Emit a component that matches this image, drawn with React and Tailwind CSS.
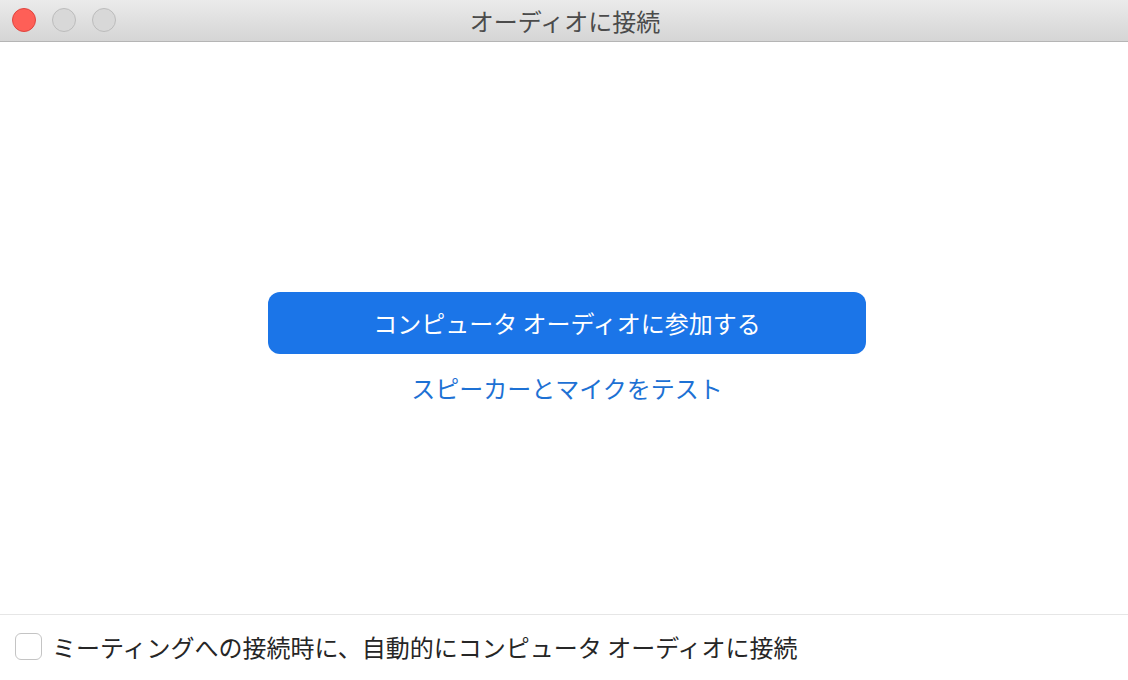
export default function App() {
  const font = { fontFamily: '"Noto Sans CJK JP", "Noto Sans", sans-serif' }
  return (
    <div className="w-[1128px] h-[680px] flex flex-col bg-white overflow-hidden" style={font}>
      <div className="h-[42px] shrink-0 relative flex items-center justify-center bg-gradient-to-b from-[#ebebeb] to-[#d5d5d5] border-b border-[#b5b5b5]">
        <div className="absolute left-[12px] top-[8px] flex gap-[16px]">
          <span className="w-[24px] h-[24px] rounded-full bg-[#fe5f57] border border-[#e0443e]" />
          <span className="w-[24px] h-[24px] rounded-full bg-[#d8d8d8] border border-[#bcbcbc]" />
          <span className="w-[24px] h-[24px] rounded-full bg-[#d8d8d8] border border-[#bcbcbc]" />
        </div>
        <span className="text-[24px] leading-none text-[#4b4b4b] pl-[2px]">オーディオに接続</span>
      </div>

      <div className="flex-1 flex flex-col items-center justify-center pt-[36px] pl-[6px]">
        <button className="w-[598px] h-[62px] rounded-[12px] bg-[#1b75e8] text-white text-[24px] leading-none">
          コンピュータ オーディオに参加する
        </button>
        <button className="mt-[22px] text-[24px] leading-none text-[#1d71d4]">
          スピーカーとマイクをテスト
        </button>
      </div>

      <div className="h-[66px] shrink-0 border-t border-[#e6e6e6] flex items-center pl-[15px] pb-[2px]">
        <span className="w-[27px] h-[27px] rounded-[6px] border border-[#c4c4c4] bg-white" />
        <span className="ml-[10px] text-[24px] leading-none text-[#262626]">
          ミーティングへの接続時に、自動的にコンピュータ オーディオに接続
        </span>
      </div>
    </div>
  )
}
